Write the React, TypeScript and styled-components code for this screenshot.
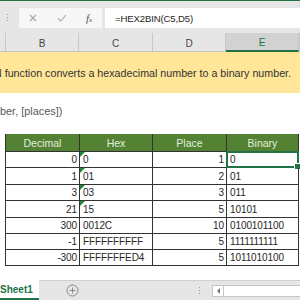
import React from "react";
import styled, { createGlobalStyle } from "styled-components";

const Global = createGlobalStyle`
  html, body { margin: 0; padding: 0; background: #ffffff; }
  body { width: 300px; height: 300px; overflow: hidden; font-family: "Liberation Sans", Arial, sans-serif; }
`;

const Page = styled.div`
  width: 300px;
  height: 300px;
  display: flex;
  flex-direction: column;
  overflow: hidden;
  background: #fff;
`;

const TopLine = styled.div`
  height: 1px;
  background: #217346;
`;

const FormulaArea = styled.div`
  height: 32px;
  background: #e6e6e6;
  display: flex;
  align-items: flex-start;
  padding-top: 7px;
  box-sizing: border-box;
`;

const Grip = styled.div`
  width: 19px;
  display: flex;
  flex-direction: column;
  align-items: center;
  gap: 2px;
  padding-top: 6px;
  padding-right: 5px;
  box-sizing: border-box;
  span { width: 1px; height: 1px; background: #9a9a9a; }
`;

const IconBox = styled.div`
  width: 83px;
  height: 20px;
  background: #f7f7f7;
  display: flex;
  align-items: center;
  padding-left: 10px;
  gap: 20px;
  box-sizing: border-box;
`;

const Fx = styled.span`
  font-family: "Liberation Serif", serif;
  font-style: italic;
  font-size: 11px;
  color: #555;
  margin-left: -1px;
  sub { font-size: 7px; vertical-align: baseline; }
`;

const FormulaInput = styled.div`
  margin-left: 3px;
  flex: 1;
  height: 20px;
  background: #fff;
  display: flex;
  align-items: center;
  padding-left: 10px;
  font-size: 9.6px;
  letter-spacing: -0.15px;
  color: #262626;
`;

const ColHeaders = styled.div`
  height: 19px;
  background: #e6e6e6;
  display: grid;
  grid-template-columns: 6px 73px 74px 73px 73px 1fr;
  align-items: stretch;
`;

const ColHead = styled.div<{ $active?: boolean }>`
  display: flex;
  align-items: center;
  justify-content: center;
  font-size: 10px;
  color: ${(p) => (p.$active ? "#217346" : "#444")};
  background: ${(p) => (p.$active ? "#d2d2d2" : "transparent")};
  border-right: 1px solid #c8c8c8;
  border-bottom: ${(p) => (p.$active ? "2px solid #217346" : "1px solid #c8c8c8")};
  box-sizing: border-box;
  padding-top: 2px;
`;

const YellowBand = styled.div`
  height: 41px;
  background: #ffe699;
  display: flex;
  align-items: center;
  overflow: hidden;
  white-space: nowrap;
  font-size: 10.7px;
  color: #333;
`;

const BandText = styled.span`
  margin-left: -6px;
`;

const SyntaxRow = styled.div`
  height: 33px;
  display: flex;
  align-items: center;
  padding-top: 3px;
  box-sizing: border-box;
  font-size: 10.9px;
  color: #595959;
  white-space: nowrap;
`;

const TableWrap = styled.div`
  margin-top: 8px;
  margin-left: 5px;
  width: 294px;
  display: grid;
  grid-template-columns: 74px 73px 74px 72px;
  border-left: 1px solid #333;
  font-size: 10px;
  color: #262626;
`;

const HeadCell = styled.div`
  height: 17px;
  background: #548235;
  color: #e2efd9;
  font-size: 10.5px;
  display: flex;
  align-items: center;
  justify-content: center;
  border-right: 1px solid #333;
  border-bottom: 1px solid #333;
  box-sizing: content-box;
`;

const Cell = styled.div<{ $right?: boolean; $h: number; $flag?: boolean }>`
  position: relative;
  height: ${(p) => p.$h - 1}px;
  display: flex;
  align-items: flex-end;
  justify-content: ${(p) => (p.$right ? "flex-end" : "flex-start")};
  padding: 0 2px 1px 3px;
  border-right: 1px solid #333;
  border-bottom: 1px solid #333;
  box-sizing: content-box;
  line-height: 12px;
  letter-spacing: -0.1px;
  ${(p) =>
    p.$flag &&
    `&::before { content: ""; position: absolute; left: 0; top: 0; border-top: 5px solid #1e8a3c; border-right: 5px solid transparent; }`}
`;

const Selection = styled.div`
  position: absolute;
  left: -1px;
  top: -1px;
  right: -1px;
  bottom: -1px;
  border: 2px solid #217346;
  box-sizing: border-box;
  &::after {
    content: "";
    position: absolute;
    right: -4px;
    bottom: -4px;
    width: 5px;
    height: 5px;
    background: #217346;
    border: 1px solid #fff;
  }
`;

const Spacer = styled.div`
  flex: 1;
`;

const TabBar = styled.div`
  height: 19px;
  background: #e6e6e6;
  border-top: 1px solid #cfcfcf;
  display: flex;
  align-items: stretch;
`;

const SheetTab = styled.div`
  width: 39px;
  background: #fff;
  color: #217346;
  font-weight: bold;
  font-size: 10px;
  display: flex;
  align-items: center;
  border-bottom: 2px solid #217346;
  box-sizing: border-box;
  margin-top: -1px;
`;

const AddBtn = styled.div`
  margin-left: 27px;
  display: flex;
  align-items: center;
`;

const Dots = styled.div`
  margin-left: auto;
  display: flex;
  flex-direction: column;
  justify-content: center;
  gap: 2px;
  margin-right: 12px;
  span { width: 1px; height: 1px; background: #999; }
`;

const Scroll = styled.div`
  width: 88px;
  height: 12px;
  align-self: center;
  background: #fff;
  border: 1px solid #c6c6c6;
  border-right: none;
  display: flex;
  align-items: center;
  box-sizing: border-box;
`;

const ScrollArrow = styled.div`
  width: 10px;
  height: 100%;
  border-right: 1px solid #c6c6c6;
  display: flex;
  align-items: center;
  justify-content: center;
  &::before {
    content: "";
    border-right: 3px solid #777;
    border-top: 3px solid transparent;
    border-bottom: 3px solid transparent;
  }
`;

const rows: [string, string, string, string][] = [
  ["0", "0", "1", "0"],
  ["1", "01", "2", "01"],
  ["3", "03", "3", "011"],
  ["21", "15", "5", "10101"],
  ["300", "0012C", "10", "0100101100"],
  ["-1", "FFFFFFFFFF", "5", "1111111111"],
  ["-300", "FFFFFFFED4", "5", "1011010100"],
];
const heights = [15, 16, 15, 16, 15, 15, 15];

export default function App() {
  return (
    <Page>
      <Global />
      <TopLine />
      <FormulaArea>
        <Grip>
          <span />
          <span />
          <span />
        </Grip>
        <IconBox>
          <svg width="8" height="8" viewBox="0 0 8 8">
            <path d="M1 1 L7 7 M7 1 L1 7" stroke="#a8a8a8" strokeWidth="1.1" />
          </svg>
          <svg width="10" height="8" viewBox="0 0 10 8">
            <path d="M1 4.5 L3.8 7 L9 1" stroke="#a8a8a8" strokeWidth="1.1" fill="none" />
          </svg>
          <Fx>
            f<sub>x</sub>
          </Fx>
        </IconBox>
        <FormulaInput>=HEX2BIN(C5,D5)</FormulaInput>
      </FormulaArea>
      <ColHeaders>
        <ColHead />
        <ColHead>B</ColHead>
        <ColHead>C</ColHead>
        <ColHead>D</ColHead>
        <ColHead $active>E</ColHead>
        <ColHead />
      </ColHeaders>
      <YellowBand>
        <BandText>N function converts a hexadecimal number to a binary number.</BandText>
      </YellowBand>
      <SyntaxRow>ber, [places])</SyntaxRow>
      <TableWrap>
        <HeadCell>Decimal</HeadCell>
        <HeadCell>Hex</HeadCell>
        <HeadCell>Place</HeadCell>
        <HeadCell>Binary</HeadCell>
        {rows.map((r, i) => (
          <React.Fragment key={i}>
            <Cell $right $h={heights[i]}>{r[0]}</Cell>
            <Cell $h={heights[i]} $flag={i < 4}>{r[1]}</Cell>
            <Cell $right $h={heights[i]}>{r[2]}</Cell>
            <Cell $h={heights[i]}>
              {r[3]}
              {i === 0 && <Selection />}
            </Cell>
          </React.Fragment>
        ))}
      </TableWrap>
      <Spacer />
      <TabBar>
        <SheetTab>Sheet1</SheetTab>
        <AddBtn>
          <svg width="13" height="13" viewBox="0 0 13 13">
            <circle cx="6.5" cy="6.5" r="5.5" stroke="#8a8a8a" fill="none" />
            <path d="M6.5 3.5 V9.5 M3.5 6.5 H9.5" stroke="#8a8a8a" />
          </svg>
        </AddBtn>
        <Dots>
          <span />
          <span />
          <span />
        </Dots>
        <Scroll>
          <ScrollArrow />
        </Scroll>
      </TabBar>
    </Page>
  );
}
